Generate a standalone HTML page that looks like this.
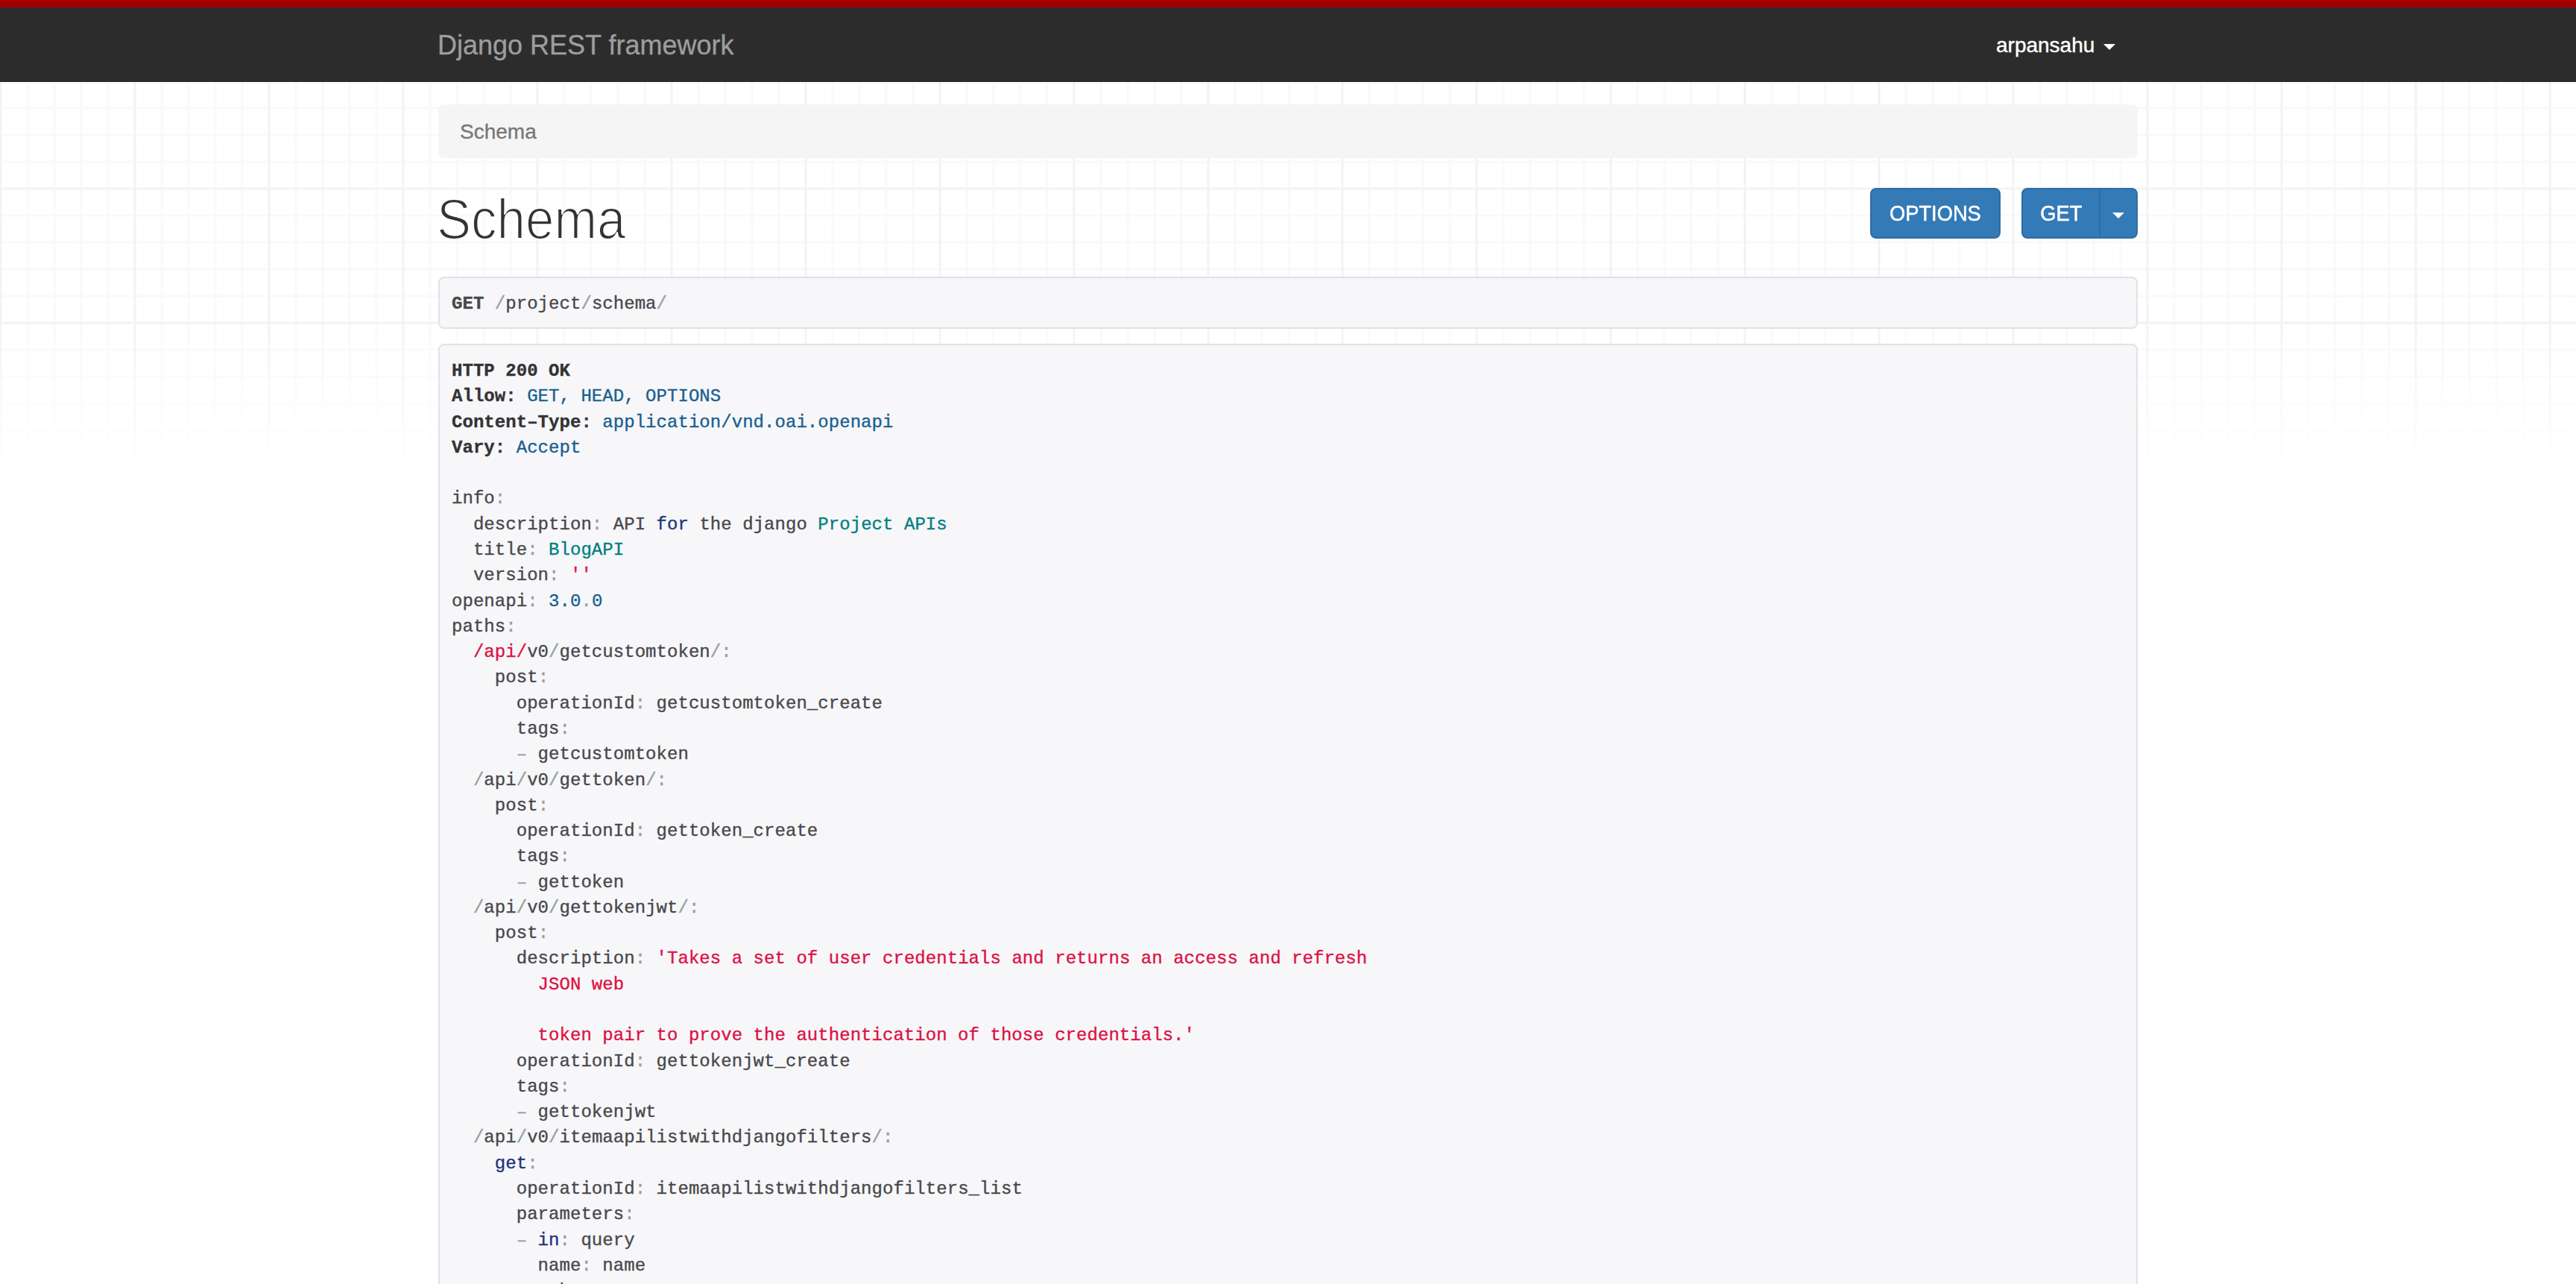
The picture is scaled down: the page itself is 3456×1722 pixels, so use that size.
<!DOCTYPE html>
<html>
<head>
<meta charset="utf-8">
<style>
html, body { margin: 0; padding: 0; }
@media (max-width: 2400px) { html { zoom: 0.5; } }
body {
  width: 3456px; height: 1722px; overflow: hidden; position: relative;
  background: #fff;
  font-family: "Liberation Sans", sans-serif;
}
.grid {
  position: absolute; left: 0; top: 0; width: 3456px; height: 612px;
  background-image:
    linear-gradient(to right, transparent 1px, #f3f3f3 1px, #f3f3f3 3px, transparent 3px),
    linear-gradient(to bottom, transparent 1px, #f3f3f3 1px, #f3f3f3 3px, transparent 3px),
    linear-gradient(to right, transparent 1px, #f9f9f9 1px, #f9f9f9 3px, transparent 3px),
    linear-gradient(to bottom, transparent 1px, #f9f9f9 1px, #f9f9f9 3px, transparent 3px),
    linear-gradient(to right, #f8f8f8 0, #f8f8f8 4px, transparent 4px),
    linear-gradient(to bottom, #f8f8f8 0, #f8f8f8 4px, transparent 4px),
    linear-gradient(to right, #fcfcfc 0, #fcfcfc 4px, transparent 4px),
    linear-gradient(to bottom, #fcfcfc 0, #fcfcfc 4px, transparent 4px);
  background-size: 180px 100%, 100% 180px, 36px 100%, 100% 36px, 180px 100%, 100% 180px, 36px 100%, 100% 36px;
  background-position: -1px 0, 0 71px, -1px 0, 0 -1px, -1px 0, 0 71px, -1px 0, 0 -1px;
  -webkit-mask-image: linear-gradient(to bottom, #000 0, #000 430px, rgba(0,0,0,0.12) 612px);
  mask-image: linear-gradient(to bottom, #000 0, #000 430px, rgba(0,0,0,0.12) 612px);
}
.redbar { position: absolute; left: 0; top: 0; width: 3456px; height: 10px; background: #A30000; }
.navbar { position: absolute; left: 0; top: 10px; width: 3456px; height: 100px; background: #2C2C2C; }
.brand { position: absolute; left: 587px; top: 1px; -webkit-text-stroke: 0.35px #9d9d9d; font-size: 36px; line-height: 100px; color: #9d9d9d; white-space: nowrap; }
.user { position: absolute; left: 2678px; top: 1px; -webkit-text-stroke: 0.4px #fff; font-size: 28px; line-height: 100px; color: #fff; white-space: nowrap; }
.caret { position: absolute; width: 0; height: 0; border-top: 8px solid #fff; border-left: 8px solid transparent; border-right: 8px solid transparent; }
.breadcrumb { position: absolute; left: 588px; top: 140px; width: 2280px; height: 72px; background: #f5f5f5; border-radius: 8px; }
.breadcrumb span { position: absolute; left: 29px; top: 1px; -webkit-text-stroke: 0.35px #777; line-height: 72px; font-size: 28px; color: #777; }
h1 { position: absolute; left: 586px; top: 244px; margin: 0; font-size: 75.5px; font-weight: normal; line-height: 100px; color: #333; white-space: nowrap; transform: scaleX(0.915); transform-origin: 0 0; -webkit-text-stroke: 2px #fff; }
.bt { display: inline-block; font-size: 29.5px; transform: scaleX(0.925); -webkit-text-stroke: 0.5px #fff; }
.btn { position: absolute; top: 252px; height: 68px; box-sizing: border-box; background: #337ab7; border: 2px solid #2e6da4; border-radius: 8px; color: #fff; font-size: 28px; line-height: 64px; text-align: center; }
pre { position: absolute; margin: 0; box-sizing: border-box; left: 588px; width: 2280px; background: #f7f7f9; border: 2px solid #e1e1e8; border-radius: 8px; padding: 18px 16px 14px; font-family: "Liberation Mono", monospace; font-size: 24px; line-height: 34.2857px; color: #48484c; white-space: pre; overflow: hidden; letter-spacing: 0.047px; -webkit-text-stroke-width: 0.35px; }
pre b { color: #333; }
pre b.pln { color: #48484c; }
.pln { color: #48484c; }
.pun { color: #93a1a1; }
.str { color: #D14; }
.kwd { color: #1e347b; }
.typ { color: teal; }
.lit { color: #195f91; }
</style>
</head>
<body>
<div class="grid"></div>
<div class="redbar"></div>
<div class="navbar">
  <div class="brand">Django REST framework</div>
  <div class="user">arpansahu</div>
  <div class="caret" style="left:2822px; top:49px;"></div>
</div>
<div class="breadcrumb"><span>Schema</span></div>
<h1>Schema</h1>
<div class="btn" style="left:2509px; width:175px;"><span class="bt">OPTIONS</span></div>
<div class="btn" style="left:2712px; width:106px; border-top-right-radius:0; border-bottom-right-radius:0;"><span class="bt">GET</span></div>
<div class="btn" style="left:2816px; width:52px; border-top-left-radius:0; border-bottom-left-radius:0;"><div class="caret" style="left:16px; top:31px;"></div></div>
<pre style="top:371px; height:70px;"><b class="pln">GET</b> <span class="pun">/</span>project<span class="pun">/</span>schema<span class="pun">/</span></pre>
<pre style="top:461px; height:1400px;"><b>HTTP 200 OK</b>
<b>Allow:</b> <span class="lit">GET, HEAD, OPTIONS</span>
<b>Content–Type:</b> <span class="lit">application/vnd.oai.openapi</span>
<b>Vary:</b> <span class="lit">Accept</span>

<span class="pln">info</span><span class="pun">:</span>
  <span class="pln">description</span><span class="pun">:</span> <span class="pln">API </span><span class="kwd">for</span><span class="pln"> the django </span><span class="typ">Project</span> <span class="typ">APIs</span>
  <span class="pln">title</span><span class="pun">:</span> <span class="typ">BlogAPI</span>
  <span class="pln">version</span><span class="pun">:</span> <span class="str">''</span>
<span class="pln">openapi</span><span class="pun">:</span> <span class="lit">3.0</span><span class="pun">.</span><span class="lit">0</span>
<span class="pln">paths</span><span class="pun">:</span>
  <span class="str">/api/</span><span class="pln">v0</span><span class="pun">/</span><span class="pln">getcustomtoken</span><span class="pun">/:</span>
    <span class="pln">post</span><span class="pun">:</span>
      <span class="pln">operationId</span><span class="pun">:</span> <span class="pln">getcustomtoken_create</span>
      <span class="pln">tags</span><span class="pun">:</span>
      <span class="pun">–</span> <span class="pln">getcustomtoken</span>
  <span class="pun">/</span><span class="pln">api</span><span class="pun">/</span><span class="pln">v0</span><span class="pun">/</span><span class="pln">gettoken</span><span class="pun">/:</span>
    <span class="pln">post</span><span class="pun">:</span>
      <span class="pln">operationId</span><span class="pun">:</span> <span class="pln">gettoken_create</span>
      <span class="pln">tags</span><span class="pun">:</span>
      <span class="pun">–</span> <span class="pln">gettoken</span>
  <span class="pun">/</span><span class="pln">api</span><span class="pun">/</span><span class="pln">v0</span><span class="pun">/</span><span class="pln">gettokenjwt</span><span class="pun">/:</span>
    <span class="pln">post</span><span class="pun">:</span>
      <span class="pln">description</span><span class="pun">:</span> <span class="str">'Takes a set of user credentials and returns an access and refresh
        JSON web

        token pair to prove the authentication of those credentials.'</span>
      <span class="pln">operationId</span><span class="pun">:</span> <span class="pln">gettokenjwt_create</span>
      <span class="pln">tags</span><span class="pun">:</span>
      <span class="pun">–</span> <span class="pln">gettokenjwt</span>
  <span class="pun">/</span><span class="pln">api</span><span class="pun">/</span><span class="pln">v0</span><span class="pun">/</span><span class="pln">itemaapilistwithdjangofilters</span><span class="pun">/:</span>
    <span class="kwd">get</span><span class="pun">:</span>
      <span class="pln">operationId</span><span class="pun">:</span> <span class="pln">itemaapilistwithdjangofilters_list</span>
      <span class="pln">parameters</span><span class="pun">:</span>
      <span class="pun">–</span> <span class="kwd">in</span><span class="pun">:</span> <span class="pln">query</span>
        <span class="pln">name</span><span class="pun">:</span> <span class="pln">name</span>
        <span class="pln">schema</span><span class="pun">:</span>
          <span class="pln">type</span><span class="pun">:</span> <span class="pln">string</span></pre>
</body>
</html>
